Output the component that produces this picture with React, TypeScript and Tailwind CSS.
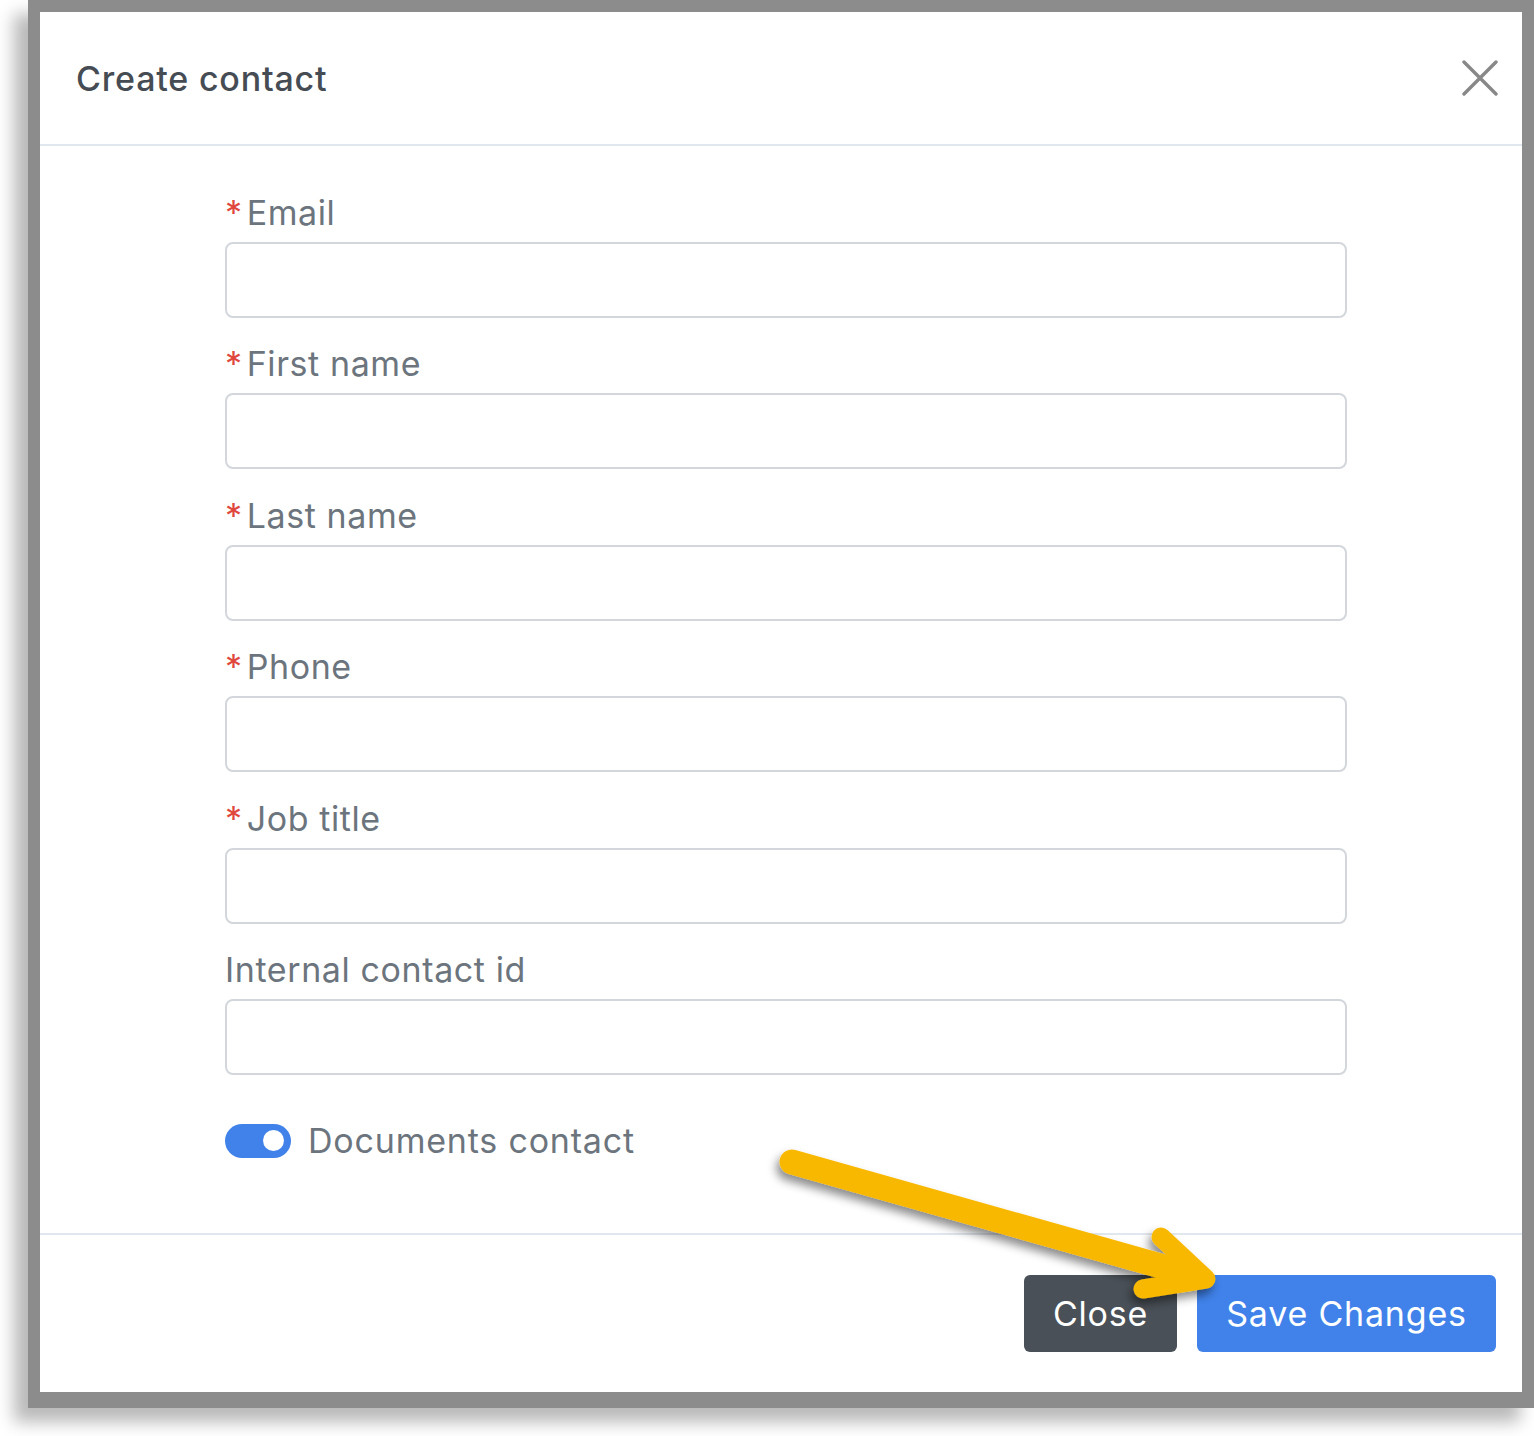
const fields = [
  { label: "Email", required: true },
  { label: "First name", required: true },
  { label: "Last name", required: true },
  { label: "Phone", required: true },
  { label: "Job title", required: true },
  { label: "Internal contact id", required: false },
];

function Field({ label, required }: { label: string; required: boolean }) {
  return (
    <div className="flex flex-col">
      <label className="mb-[5px] flex items-center text-[34px] leading-[48px] tracking-[0.6px] text-[#6c757d]">
        {required && <span className="mr-[4px] text-[#e0483e]">*</span>}
        {label}
      </label>
      <input
        type="text"
        className="h-[76px] w-full rounded-[8px] border-2 border-[#d3d7dc] bg-white px-4 text-[30px] outline-none"
      />
    </div>
  );
}

function Toggle({ on }: { on: boolean }) {
  return (
    <div
      className={
        on
          ? "flex h-[34px] w-[66px] items-center justify-end rounded-full bg-[#4082ea] pr-[7px]"
          : "flex h-[34px] w-[66px] items-center justify-start rounded-full bg-[#ced4da] pl-[7px]"
      }
    >
      <div className="h-[21px] w-[21px] rounded-full bg-white" />
    </div>
  );
}

function CloseIcon() {
  return (
    <svg width={36} height={36} viewBox="0 0 36 36" fill="none" stroke="#888888" strokeWidth={3.4} strokeLinecap="round">
      <path d="M2 2 L34 34 M34 2 L2 34" />
    </svg>
  );
}

// yellow pointer drawn on top of the dialog
function Pointer() {
  return (
    <svg
      className="pointer-events-none absolute left-0 top-0"
      width={1534}
      height={1436}
      viewBox="0 0 1534 1436"
    >
      <defs>
        <filter id="drop" x="-20%" y="-20%" width="140%" height="140%">
          <feDropShadow dx="-3" dy="6" stdDeviation="5" floodColor="#000" floodOpacity="0.45" />
        </filter>
      </defs>
      <g filter="url(#drop)" stroke="#f9b800" fill="none" strokeLinecap="round" strokeLinejoin="round">
        <path d="M792 1162 L1196 1276" strokeWidth={25} />
        <path d="M1161 1237 L1206 1279 L1143 1289" strokeWidth={19} />
      </g>
    </svg>
  );
}

export default function App() {
  return (
    <div className="relative h-[1436px] w-[1534px] bg-white font-['Inter','Noto_Sans',sans-serif]">
      <div className="ml-[28px] h-[1408px] w-[1506px] bg-[#8c8c8c] pb-[16px] pl-[12px] pr-[12px] pt-[12px] shadow-[-14px_14px_16px_rgba(0,0,0,0.28)]">
        <div className="flex h-full flex-col bg-white">
          <div className="flex h-[134px] shrink-0 items-center justify-between border-b-2 border-[#e1e7ee] pl-[36px] pr-[24px]">
            <h2 className="text-[34px] font-medium tracking-[0.8px] text-[#464c53]">Create contact</h2>
            <button>
              <CloseIcon />
            </button>
          </div>

          <div className="flex flex-col pb-[68px] pl-[185px] pt-[43px]">
            <div className="flex w-[1122px] flex-col gap-[22.4px]">
              {fields.map((f) => (
                <Field key={f.label} label={f.label} required={f.required} />
              ))}
            </div>
            <div className="mt-[42px] flex items-center gap-[17px]">
              <Toggle on={true} />
              <span className="text-[34px] leading-[48px] tracking-[0.8px] text-[#6c757d]">Documents contact</span>
            </div>
          </div>

          <div className="flex shrink-0 justify-end gap-[20px] border-t-2 border-[#e1e7ee] pb-[40px] pr-[26px] pt-[40px]">
            <button className="h-[77px] w-[153px] rounded-[6px] bg-[#495057] text-[34px] tracking-[0.8px] text-white">
              Close
            </button>
            <button className="h-[77px] w-[299px] rounded-[6px] bg-[#4082ea] text-[34px] tracking-[0.8px] text-white">
              Save Changes
            </button>
          </div>
        </div>
      </div>
      <Pointer />
    </div>
  );
}
